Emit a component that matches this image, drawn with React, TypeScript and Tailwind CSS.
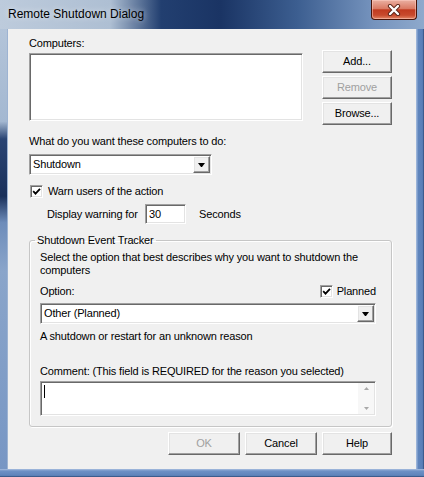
import React from "react";

const sunken =
  "bg-white border border-t-[#a0a0a0] border-l-[#a0a0a0] border-r-white border-b-white shadow-[inset_1px_1px_0_#696969,inset_-1px_-1px_0_#e3e3e3]";
const raised =
  "bg-[#f0f0f0] border border-t-white border-l-white border-r-[#696969] border-b-[#696969] shadow-[inset_-1px_-1px_0_#a0a0a0,inset_1px_1px_0_#e3e3e3]";

function Arrow() {
  return (
    <svg width="7" height="4" viewBox="0 0 7 4">
      <polygon points="0,0 7,0 4,4 3,4" fill="#000" />
    </svg>
  );
}

function Combo({ text, w }: { text: string; w: string }) {
  return (
    <div className={`${sunken} ${w} h-[21px] p-[1px] flex items-stretch`}>
      <span className="flex-1 pl-[2px] flex items-center">{text}</span>
      <div className={`${raised} w-[17px] flex items-center justify-center`}>
        <Arrow />
      </div>
    </div>
  );
}

function Check() {
  return (
    <div className={`${sunken} w-[13px] h-[13px] shrink-0 flex items-center justify-center`}>
      <svg width="9" height="9" viewBox="0 0 9 9">
        <path d="M1.2 4.2 L3.5 6.6 L8 1.8" stroke="#000" strokeWidth="1.8" fill="none" />
      </svg>
    </div>
  );
}

function Btn({ label, disabled, w = "w-[70px]" }: { label: string; disabled?: boolean; w?: string }) {
  return (
    <div
      className={`${raised} ${w} h-[23px] flex items-center justify-center ${
        disabled ? "text-[#a0a0a0]" : "text-black"
      }`}
    >
      {label}
    </div>
  );
}

export default function App() {
  return (
    <div className="w-[424px] h-[477px] flex flex-col font-['Liberation_Sans',Arial,sans-serif] text-[11px] leading-[13px] tracking-[-0.15px] text-black overflow-hidden bg-[#6d8fc2]">
      {/* Title bar */}
      <div className="relative h-[29px] shrink-0 flex items-center pl-[8px] bg-[linear-gradient(90deg,#bdcbdc_0%,#aebfd3_26%,#223f70_38%,#1a3464_52%,#3c5e90_70%,#7593bd_88%,#8ea9cc_100%)]">
        <span className="text-[12px] tracking-normal text-black [text-shadow:0_0_6px_rgba(255,255,255,0.7)]">
          Remote Shutdown Dialog
        </span>
        <div className="absolute top-0 right-[7px] w-[46px] h-[20px] rounded-b-[4px] border border-t-0 border-[#4a1408] bg-[linear-gradient(180deg,#eab0a2_0%,#da7a64_45%,#c13b20_52%,#c84a2d_80%,#e38766_100%)] shadow-[inset_0_0_0_1px_rgba(255,210,200,0.5)] flex items-center justify-center">
          <svg width="14" height="12" viewBox="0 0 14 12">
            <path d="M3 2 L11 10 M11 2 L3 10" stroke="#5a2418" strokeWidth="4.2" strokeLinecap="round" />
            <path d="M3 2 L11 10 M11 2 L3 10" stroke="#ffffff" strokeWidth="2.4" strokeLinecap="round" />
          </svg>
        </div>
      </div>

      <div className="flex h-[440px] shrink-0">
        {/* Left frame */}
        <div className="w-[8px] shrink-0 bg-[linear-gradient(180deg,#b3c4d9_0%,#a4b8d1_21%,#2a4473_25%,#1a305a_38%,#6d8cba_44%,#8aa5ca_55%,#7796c4_100%)]" />

        {/* Client area */}
        <div className="w-[408px] shrink-0 bg-[#f0f0f0] pt-[8px] pl-[21px] pr-[24px] shadow-[0_0_0_1px_#9db3d2] flex flex-col">
          {/* Computers row */}
          <div className="flex">
            <div className="w-[274px] flex flex-col">
              <div className="h-[13px]">Computers:</div>
              <div className={`${sunken} mt-[3px] h-[68px]`} />
            </div>
            <div className="ml-[19px] pt-[13px] flex flex-col gap-[3px]">
              <Btn label="Add..." />
              <Btn label="Remove" disabled />
              <Btn label="Browse..." />
            </div>
          </div>

          <div className="mt-[10px] h-[13px]">What do you want these computers to do:</div>
          <div className="mt-[6px]">
            <Combo text="Shutdown" w="w-[183px]" />
          </div>

          <div className="mt-[10px] flex items-center gap-[5px] pl-[1px] h-[13px]">
            <Check />
            <span>Warn users of the action</span>
          </div>

          <div className="mt-[6px] flex items-center pl-[18px] h-[20px]">
            <span className="w-[98px]">Display warning for</span>
            <div className={`${sunken} w-[41px] h-[20px] pl-[3px] flex items-center`}>30</div>
            <span className="ml-[13px]">Seconds</span>
          </div>

          {/* Group box */}
          <fieldset className="mt-[10px] w-[363px] border border-[#c6c6c6] rounded-[3px] shadow-[inset_1px_1px_0_#fff,1px_1px_0_#fff] pl-[10px] pr-[15px] pt-[4px] pb-[10px]">
            <legend className="ml-[-5px] px-[2px] leading-[13px]">Shutdown Event Tracker</legend>
            <div className="leading-[13px]">
              Select the option that best describes why you want to shutdown the
              <br />
              computers
            </div>
            <div className="mt-[8px] h-[13px] flex items-center justify-between">
              <span>Option:</span>
              <div className="flex items-center gap-[4px]">
                <Check />
                <span>Planned</span>
              </div>
            </div>
            <div className="mt-[5px]">
              <Combo text="Other (Planned)" w="w-full" />
            </div>
            <div className="mt-[6px] h-[13px]">A shutdown or restart for an unknown reason</div>
            <div className="mt-[22px] h-[13px]">Comment: (This field is REQUIRED for the reason you selected)</div>
            <div className={`${sunken} mt-[3px] h-[35px] p-[1px] flex`}>
              <div className="flex-1">
                <div className="w-px h-[13px] bg-black ml-[2px] mt-[2px]" />
              </div>
              <div className="w-[16px] bg-[#f7f7f7] flex flex-col items-center justify-between py-[4px]">
                <svg width="5" height="3" viewBox="0 0 5 3">
                  <polygon points="2.5,0 5,3 0,3" fill="#a8a8a8" />
                </svg>
                <svg width="5" height="3" viewBox="0 0 5 3">
                  <polygon points="0,0 5,0 2.5,3" fill="#a8a8a8" />
                </svg>
              </div>
            </div>
          </fieldset>

          <div className="mt-[5px] flex justify-end gap-[5px] pr-[-1px]">
            <Btn label="OK" disabled w="w-[72px]" />
            <Btn label="Cancel" w="w-[72px]" />
            <Btn label="Help" w="w-[70px]" />
          </div>
        </div>

        {/* Right frame */}
        <div className="w-[8px] shrink-0 bg-[linear-gradient(90deg,#a9bfe0_0%,#5f85bd_30%,#5a7fb8_80%,#2f4c7a_100%)]" />
      </div>

      {/* Bottom frame */}
      <div className="h-[8px] shrink-0 bg-[linear-gradient(180deg,#a9bfe0_0%,#6d90c5_25%,#5f84bb_80%,#2b4a78_100%)]" />
    </div>
  );
}
